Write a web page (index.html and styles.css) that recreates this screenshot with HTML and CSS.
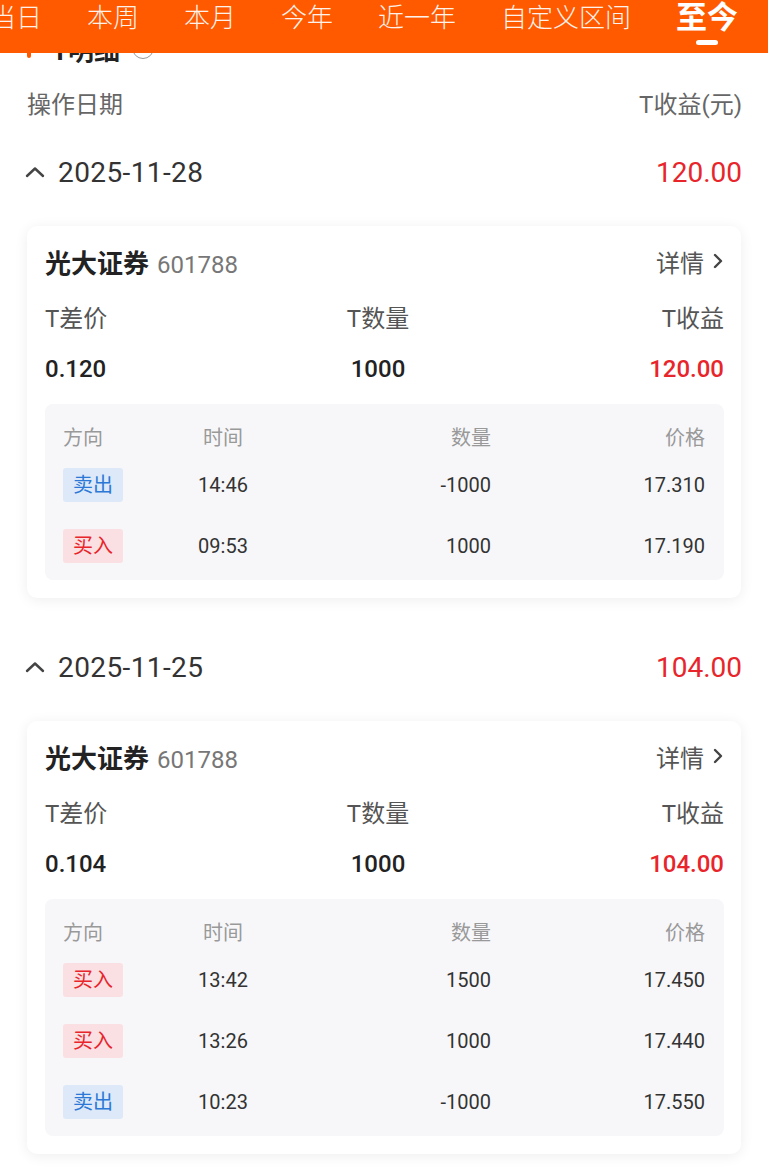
FILE: index.html
```html
<!DOCTYPE html>
<html lang="zh-CN">
<head>
<meta charset="utf-8">
<title>T明细</title>
<link rel="stylesheet" href="styles.css">
</head>
<body>
<header class="topbar">
  <nav class="tabs">
    <span class="tab">当日</span>
    <span class="tab">本周</span>
    <span class="tab">本月</span>
    <span class="tab">今年</span>
    <span class="tab">近一年</span>
    <span class="tab">自定义区间</span>
    <span class="tab active">至今</span>
  </nav>
</header>

<main class="page">
  <div class="title-row">
    <span class="title-bar"></span>
    <span class="title-text">T明细</span>
    <span class="help-icon">?</span>
  </div>

  <div class="col-head">
    <span>操作日期</span>
    <span>T收益(元)</span>
  </div>

  <section class="day">
    <div class="date-row">
      <div class="date-left">
        <svg class="chev-up" width="20" height="12" viewBox="0 0 20 12"><path d="M2 10 L10 2.5 L18 10" fill="none" stroke="#444" stroke-width="2.4" stroke-linecap="round" stroke-linejoin="round"/></svg>
        <span class="date">2025-11-28</span>
      </div>
      <span class="amount red">120.00</span>
    </div>

    <div class="card">
      <div class="card-head">
        <div class="stock"><span class="stock-name">光大证券</span><span class="stock-code">601788</span></div>
        <div class="detail">详情<svg width="12" height="18" viewBox="0 0 12 18"><path d="M3 3 L9 9 L3 15" fill="none" stroke="#444" stroke-width="2.4" stroke-linecap="round" stroke-linejoin="round"/></svg></div>
      </div>
      <div class="stats labels">
        <span>T差价</span><span class="mid">T数量</span><span class="end">T收益</span>
      </div>
      <div class="stats values">
        <span>0.120</span><span class="mid">1000</span><span class="end red">120.00</span>
      </div>
      <div class="trades">
        <div class="trow thead"><span>方向</span><span class="c">时间</span><span class="r">数量</span><span class="r">价格</span></div>
        <div class="trow"><span><em class="badge sell">卖出</em></span><span class="c">14:46</span><span class="r">-1000</span><span class="r">17.310</span></div>
        <div class="trow"><span><em class="badge buy">买入</em></span><span class="c">09:53</span><span class="r">1000</span><span class="r">17.190</span></div>
      </div>
    </div>
  </section>

  <section class="day">
    <div class="date-row">
      <div class="date-left">
        <svg class="chev-up" width="20" height="12" viewBox="0 0 20 12"><path d="M2 10 L10 2.5 L18 10" fill="none" stroke="#444" stroke-width="2.4" stroke-linecap="round" stroke-linejoin="round"/></svg>
        <span class="date">2025-11-25</span>
      </div>
      <span class="amount red">104.00</span>
    </div>

    <div class="card">
      <div class="card-head">
        <div class="stock"><span class="stock-name">光大证券</span><span class="stock-code">601788</span></div>
        <div class="detail">详情<svg width="12" height="18" viewBox="0 0 12 18"><path d="M3 3 L9 9 L3 15" fill="none" stroke="#444" stroke-width="2.4" stroke-linecap="round" stroke-linejoin="round"/></svg></div>
      </div>
      <div class="stats labels">
        <span>T差价</span><span class="mid">T数量</span><span class="end">T收益</span>
      </div>
      <div class="stats values">
        <span>0.104</span><span class="mid">1000</span><span class="end red">104.00</span>
      </div>
      <div class="trades">
        <div class="trow thead"><span>方向</span><span class="c">时间</span><span class="r">数量</span><span class="r">价格</span></div>
        <div class="trow"><span><em class="badge buy">买入</em></span><span class="c">13:42</span><span class="r">1500</span><span class="r">17.450</span></div>
        <div class="trow"><span><em class="badge buy">买入</em></span><span class="c">13:26</span><span class="r">1000</span><span class="r">17.440</span></div>
        <div class="trow"><span><em class="badge sell">卖出</em></span><span class="c">10:23</span><span class="r">-1000</span><span class="r">17.550</span></div>
      </div>
    </div>
  </section>
</main>
</body>
</html>
```

FILE: styles.css
```css
* { box-sizing: border-box; }

html, body {
  margin: 0;
  padding: 0;
  background: #fff;
  font-family: Roboto, "Noto Sans CJK SC", sans-serif;
  color: #333;
}

.topbar {
  position: fixed;
  top: 0;
  left: 0;
  right: 0;
  height: 53px;
  background: #ff5a00;
  overflow: hidden;
  z-index: 10;
}

.tabs {
  display: flex;
  align-items: flex-start;
  gap: 45px;
  margin-left: -10px;
  white-space: nowrap;
}

.tab {
  font-size: 26px;
  line-height: 36px;
  color: #fff;
  opacity: 0.92;
  font-weight: 300;
}

.tab.active {
  position: relative;
  font-size: 31px;
  line-height: 36px;
  font-weight: 700;
  opacity: 1;
}

.tab.active::after {
  content: "";
  position: absolute;
  left: 50%;
  top: 40px;
  width: 22px;
  height: 5px;
  margin-left: -11px;
  border-radius: 3px;
  background: #fff;
}

.page {
  padding: 28px 27px 40px 27px;
}

.title-row {
  display: flex;
  align-items: center;
  height: 40px;
}

.title-bar {
  width: 4px;
  height: 20px;
  border-radius: 2px;
  background: #ff5a00;
}

.title-text {
  margin-left: 21px;
  font-size: 26px;
  font-weight: 700;
  color: #222;
}

.help-icon {
  margin-left: 12px;
  width: 22px;
  height: 22px;
  border: 1.5px solid #999;
  border-radius: 50%;
  font-size: 15px;
  line-height: 19px;
  text-align: center;
  color: #999;
}

.col-head {
  display: flex;
  justify-content: space-between;
  align-items: center;
  height: 40px;
  margin-top: 14px;
  font-size: 24px;
  color: #666;
}

.col-head span:last-child {
  margin-right: -1px;
}

.day + .day {
  margin-top: 41px;
}

.date-row {
  display: flex;
  justify-content: space-between;
  align-items: center;
  height: 56px;
  margin-top: 22px;
}

.day + .day .date-row {
  margin-top: 0;
}

.date-left {
  display: flex;
  align-items: center;
}

.chev-up {
  margin-left: -2px;
}

.date {
  margin-left: 13px;
  font-size: 28px;
  letter-spacing: 0.4px;
  color: #333;
}

.amount {
  font-size: 28px;
  margin-right: -1px;
}

.red {
  color: #e8252b;
}

.card {
  margin-top: 26px;
  padding: 17px 17px 18px 18px;
  background: #fff;
  border-radius: 10px;
  box-shadow: 0 2px 14px rgba(0, 0, 0, 0.07);
}

.card-head {
  display: flex;
  justify-content: space-between;
  align-items: center;
  height: 36px;
}

.stock {
  display: flex;
  align-items: baseline;
}

.stock-name {
  font-size: 26px;
  font-weight: 700;
  color: #222;
}

.stock-code {
  margin-left: 8px;
  font-size: 24px;
  color: #777;
}

.detail {
  display: flex;
  align-items: center;
  gap: 8px;
  font-size: 24px;
  color: #555;
}

.stats {
  display: grid;
  grid-template-columns: 300px 66px 1fr;
  align-items: center;
  height: 36px;
}

.stats .mid {
  text-align: center;
  white-space: nowrap;
}

.stats .end {
  text-align: right;
}

.labels {
  margin-top: 19px;
  font-size: 24px;
  color: #555;
}

.values {
  margin-top: 17px;
  font-size: 24px;
  font-weight: 500;
  color: #222;
}

.values .red {
  color: #e8252b;
}

.trades {
  margin-top: 17px;
  padding: 14px 19px 4px 18px;
  background: #f7f7f9;
  border-radius: 8px;
}

.trow {
  display: grid;
  grid-template-columns: 100px 120px 208px 1fr;
  align-items: center;
  height: 61px;
  font-size: 20px;
  color: #333;
}

.trow.thead {
  height: 36px;
  color: #999;
}

.trow .c {
  text-align: center;
}

.trow .r {
  text-align: right;
}

.badge {
  display: inline-block;
  width: 60px;
  height: 34px;
  line-height: 34px;
  text-align: center;
  font-style: normal;
  font-size: 20px;
  border-radius: 3px;
}

.badge.sell {
  color: #2b78d6;
  background: #dde9f8;
}

.badge.buy {
  color: #e8252b;
  background: #fae0e3;
}
```
